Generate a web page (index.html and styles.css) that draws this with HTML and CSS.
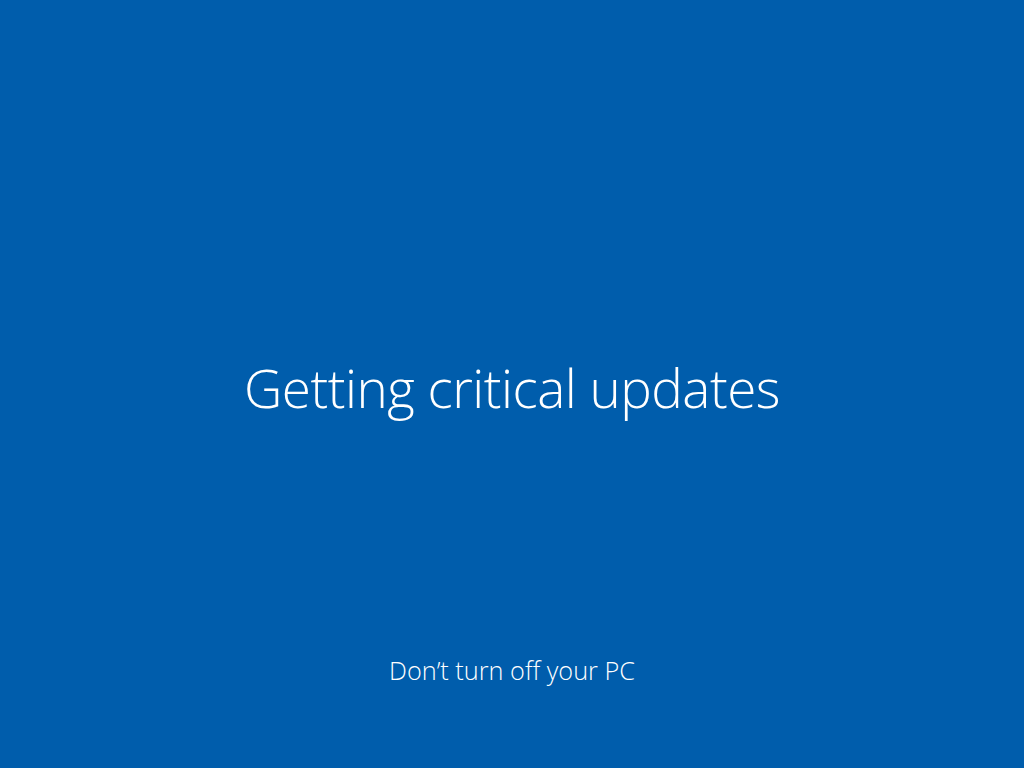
FILE: index.html
```html
<!DOCTYPE html>
<html lang="en">
<head>
<meta charset="utf-8">
<title>Getting critical updates</title>
<link rel="stylesheet" href="styles.css">
</head>
<body>
<main class="screen">
  <div class="center">
    <h1 class="title">Getting critical updates</h1>
  </div>
  <p class="note">Don’t turn off your PC</p>
</main>
</body>
</html>
```
FILE: styles.css
```css
html, body {
  margin: 0;
  padding: 0;
  height: 100%;
  background: #005dac;
}
.screen {
  height: 768px;
  display: flex;
  flex-direction: column;
  align-items: center;
  color: #ffffff;
  font-family: "Open Sans", "Noto Sans", sans-serif;
  font-weight: 300;
}
.center {
  flex: 1;
  display: flex;
  align-items: center;
  justify-content: center;
  padding-top: 120px;
}
.title {
  margin: 0;
  font-size: 53px;
  font-weight: 300;
  line-height: 1.2;
  letter-spacing: -0.5px;
}
.note {
  margin: 0 0 83px;
  font-size: 25.3px;
  font-weight: 300;
  line-height: 1.2;
}
```
